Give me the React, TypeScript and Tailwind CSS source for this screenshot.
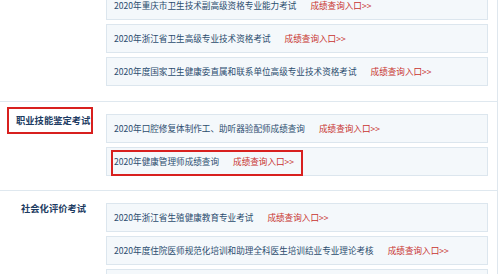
const sections = [
  {
    label: "",
    rows: [
      "2020年重庆市卫生技术副高级资格专业能力考试",
      "2020年浙江省卫生高级专业技术资格考试",
      "2020年度国家卫生健康委直属和联系单位高级专业技术资格考试",
    ],
  },
  {
    label: "职业技能鉴定考试",
    rows: ["2020年口腔修复体制作工、助听器验配师成绩查询", "2020年健康管理师成绩查询"],
  },
  {
    label: "社会化评价考试",
    rows: [
      "2020年浙江省生殖健康教育专业考试",
      "2020年度住院医师规范化培训和助理全科医生培训结业专业理论考核",
      "",
    ],
  },
];

function Row({ title, marked }: { title: string; marked?: boolean }) {
  return (
    <div className="relative flex h-[29px] items-center gap-[14px] border border-[#dce6ee] bg-[#f4f8fb] pl-[7px]">
      {title ? (
        <>
          <span className="text-[#2b4c6e]">{title}</span>
          <a className="text-[#c8332f]">成绩查询入口&gt;&gt;</a>
        </>
      ) : null}
      {marked ? (
        <div className="absolute left-[4px] top-[2px] h-[26px] w-[192px] border-2 border-[#d8201f]" />
      ) : null}
    </div>
  );
}

export default function App() {
  return (
    <div
      className="h-[274px] w-[498px] overflow-hidden border-r border-[#dfe7ee] bg-white text-[8.6px] leading-none"
      style={{ fontFamily: '"Noto Sans CJK SC", "Noto Sans", sans-serif' }}
    >
      <div className="-mt-[9px]">
        {sections.map((section, i) => (
          <div
            key={i}
            className={
              i === 0
                ? "flex pb-[15px]"
                : i === 1
                  ? "flex border-t border-[#dfe8ef] pb-[14px] pt-[12px]"
                  : "flex border-t border-[#dfe8ef] pb-[14px] pt-[12px]"
            }
          >
            <div className="relative w-[106px] shrink-0">
              {section.label ? (
                <div
                  className={
                    i === 1
                      ? "pl-[16px] pt-[2px] text-[9.3px] font-bold text-[#1d3b62]"
                      : "pl-[21px] pt-[1px] text-[9.3px] font-bold text-[#1d3b62]"
                  }
                >
                  {section.label}
                </div>
              ) : null}
              {i === 1 ? (
                <div className="absolute left-[7px] top-[-7px] h-[27px] w-[86px] border-2 border-[#d8201f]" />
              ) : null}
            </div>
            <div className="flex w-[382px] flex-col gap-[4px]">
              {section.rows.map((row, j) => (
                <Row key={j} title={row} marked={i === 1 && j === 1} />
              ))}
            </div>
          </div>
        ))}
      </div>
    </div>
  );
}
